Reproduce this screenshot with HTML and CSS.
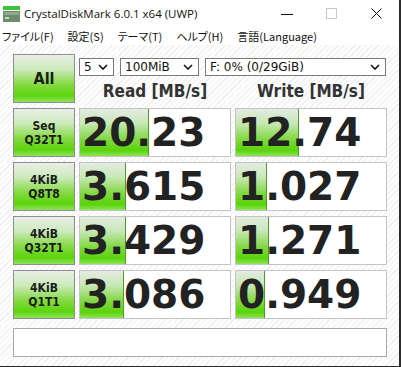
FILE: index.html
```html
<!DOCTYPE html>
<html lang="ja">
<head>
<meta charset="utf-8">
<title>CrystalDiskMark 6.0.1 x64 (UWP)</title>
<link rel="stylesheet" href="styles.css">
</head>
<body>
<div class="window">
	<div class="titlebar">
		<svg class="app-icon" width="17" height="16" viewBox="0 0 17 16">
			<rect x="0" y="0" width="17" height="4" fill="#3cc43c"/>
			<rect x="0" y="5" width="17" height="11" fill="#6e8b6e"/>
			<rect x="1" y="6" width="15" height="3" fill="#8fa88f"/>
			<rect x="2" y="11" width="4" height="2" fill="#b9e6b9"/>
		</svg>
		<span class="title">CrystalDiskMark 6.0.1 x64 (UWP)</span>
		<div class="caption">
			<span class="cap-btn"><svg width="12" height="12" viewBox="0 0 12 12"><line x1="0" y1="6.5" x2="12" y2="6.5" stroke="#111" stroke-width="1"/></svg></span>
			<span class="cap-btn"><svg width="11" height="11" viewBox="0 0 11 11"><rect x="0.5" y="0.5" width="10" height="10" fill="none" stroke="#c8c8c8"/></svg></span>
			<span class="cap-btn"><svg width="11" height="11" viewBox="0 0 11 11"><path d="M0.5 0.5L10.5 10.5M10.5 0.5L0.5 10.5" stroke="#111" stroke-width="1"/></svg></span>
		</div>
	</div>
	<div class="menubar">
		<span>ファイル(F)</span>
		<span>設定(S)</span>
		<span>テーマ(T)</span>
		<span>ヘルプ(H)</span>
		<span>言語(Language)</span>
	</div>
	<div class="main">
		<div class="board">
			<div class="btn all">All</div>
			<div class="controls">
				<div class="selects">
					<div class="select s-count"><span>5</span><svg width="10" height="6" viewBox="0 0 10 6"><path d="M1 1L5 5L9 1" fill="none" stroke="#111" stroke-width="1.6"/></svg></div>
					<div class="select s-size"><span>100MiB</span><svg width="10" height="6" viewBox="0 0 10 6"><path d="M1 1L5 5L9 1" fill="none" stroke="#111" stroke-width="1.6"/></svg></div>
					<div class="select s-drive"><span>F: 0% (0/29GiB)</span><svg width="10" height="6" viewBox="0 0 10 6"><path d="M1 1L5 5L9 1" fill="none" stroke="#111" stroke-width="1.6"/></svg></div>
				</div>
				<div class="head">Read [MB/s]</div>
				<div class="head">Write [MB/s]</div>
			</div>

			<div class="btn label">Seq<br>Q32T1</div>
			<div class="value" style="--w:68px">20.23</div>
			<div class="value" style="--w:62px">12.74</div>

			<div class="btn label">4KiB<br>Q8T8</div>
			<div class="value" style="--w:45px">3.615</div>
			<div class="value" style="--w:30px">1.027</div>

			<div class="btn label">4KiB<br>Q32T1</div>
			<div class="value" style="--w:45px">3.429</div>
			<div class="value" style="--w:32px">1.271</div>

			<div class="btn label">4KiB<br>Q1T1</div>
			<div class="value" style="--w:43px">3.086</div>
			<div class="value" style="--w:28px">0.949</div>
		</div>
		<div class="comment"></div>
	</div>
</div>
</body>
</html>
```

FILE: styles.css
```css
html,body{margin:0; padding:0; background:#fff;}
body{width:401px; height:367px; overflow:hidden;}

.window{display:flex; flex-direction:column; width:399px; height:366px; border-right:2px solid #2b2b2b; border-bottom:1px solid #2b2b2b; background:#fff;}

.titlebar{display:flex; align-items:center; height:27px; flex:none;}
.app-icon{margin:0 0 0 3px; flex:none;}
.title{margin-left:4px; font-family:"Open Sans","Noto Sans",sans-serif; font-size:11.5px; color:#111;}
.caption{display:flex; margin-left:auto; height:27px;}
.cap-btn{display:flex; align-items:center; justify-content:center; width:45px; height:27px;}

.menubar{display:flex; gap:14px; height:18px; flex:none; padding-left:2px; align-items:center; font-family:"Noto Sans CJK JP",sans-serif; font-size:11px; font-feature-settings:"palt"; color:#111; white-space:nowrap;}

.main{flex:1; padding:9px 12px 0 13px; background:repeating-linear-gradient(135deg,#fdfdfd 0 3px,#efefef 3px 4px);}

.board{display:grid; grid-template-columns:62px 152px 152px; grid-template-rows:repeat(5,49px); column-gap:4px; row-gap:5px;}

.btn{box-sizing:border-box; display:flex; align-items:center; justify-content:center; text-align:center; border:1px solid #8e8e8e; color:#1c1c1c; font-family:"DejaVu Sans Condensed","DejaVu Sans",sans-serif; font-weight:bold; background:linear-gradient(to bottom,#e9efe7 0%,#cdeabd 30%,#86da44 62%,#5cd40c 86%,#8fe35c 100%);}
.all{font-size:16px;}
.label{font-size:12px; line-height:14px;}

.controls{grid-column:2 / 4; display:grid; grid-template-columns:152px 152px; column-gap:4px; grid-template-rows:18px 1fr; padding-top:4px;}
.selects{grid-column:1 / 3; display:flex; gap:6px;}
.select{box-sizing:border-box; display:flex; align-items:center; justify-content:space-between; height:18px; padding:0 5px 0 4px; border:1px solid #7a7a7a; background:#fff; font-family:"DejaVu Sans",sans-serif; font-size:12px; color:#111;}
.s-count{width:35px;}
.s-size{width:79px;}
.s-drive{width:181px;}
.head{text-align:center; font-family:"DejaVu Sans Condensed","DejaVu Sans",sans-serif; font-weight:bold; font-size:17px; line-height:20px; padding-top:5px; color:#333;}

.value{box-sizing:border-box; border:1px solid #c4c4c4; padding-left:2px; font-family:"DejaVu Sans",sans-serif; font-weight:bold; font-size:39px; line-height:47px; color:#222; white-space:nowrap; overflow:hidden;
	background:linear-gradient(#4f9a36,#4f9a36) var(--w) 0 / 1px 100% no-repeat,
		linear-gradient(to bottom,#e4ebe2 0%,#c8e8b6 30%,#82d842 64%,#5ad40a 88%,#8ee35a 100%) 0 0 / var(--w) 100% no-repeat,
		#fff;}

.comment{box-sizing:border-box; height:29px; margin-top:9px; border:1px solid #a8a8a8; background:#fff;}
```
